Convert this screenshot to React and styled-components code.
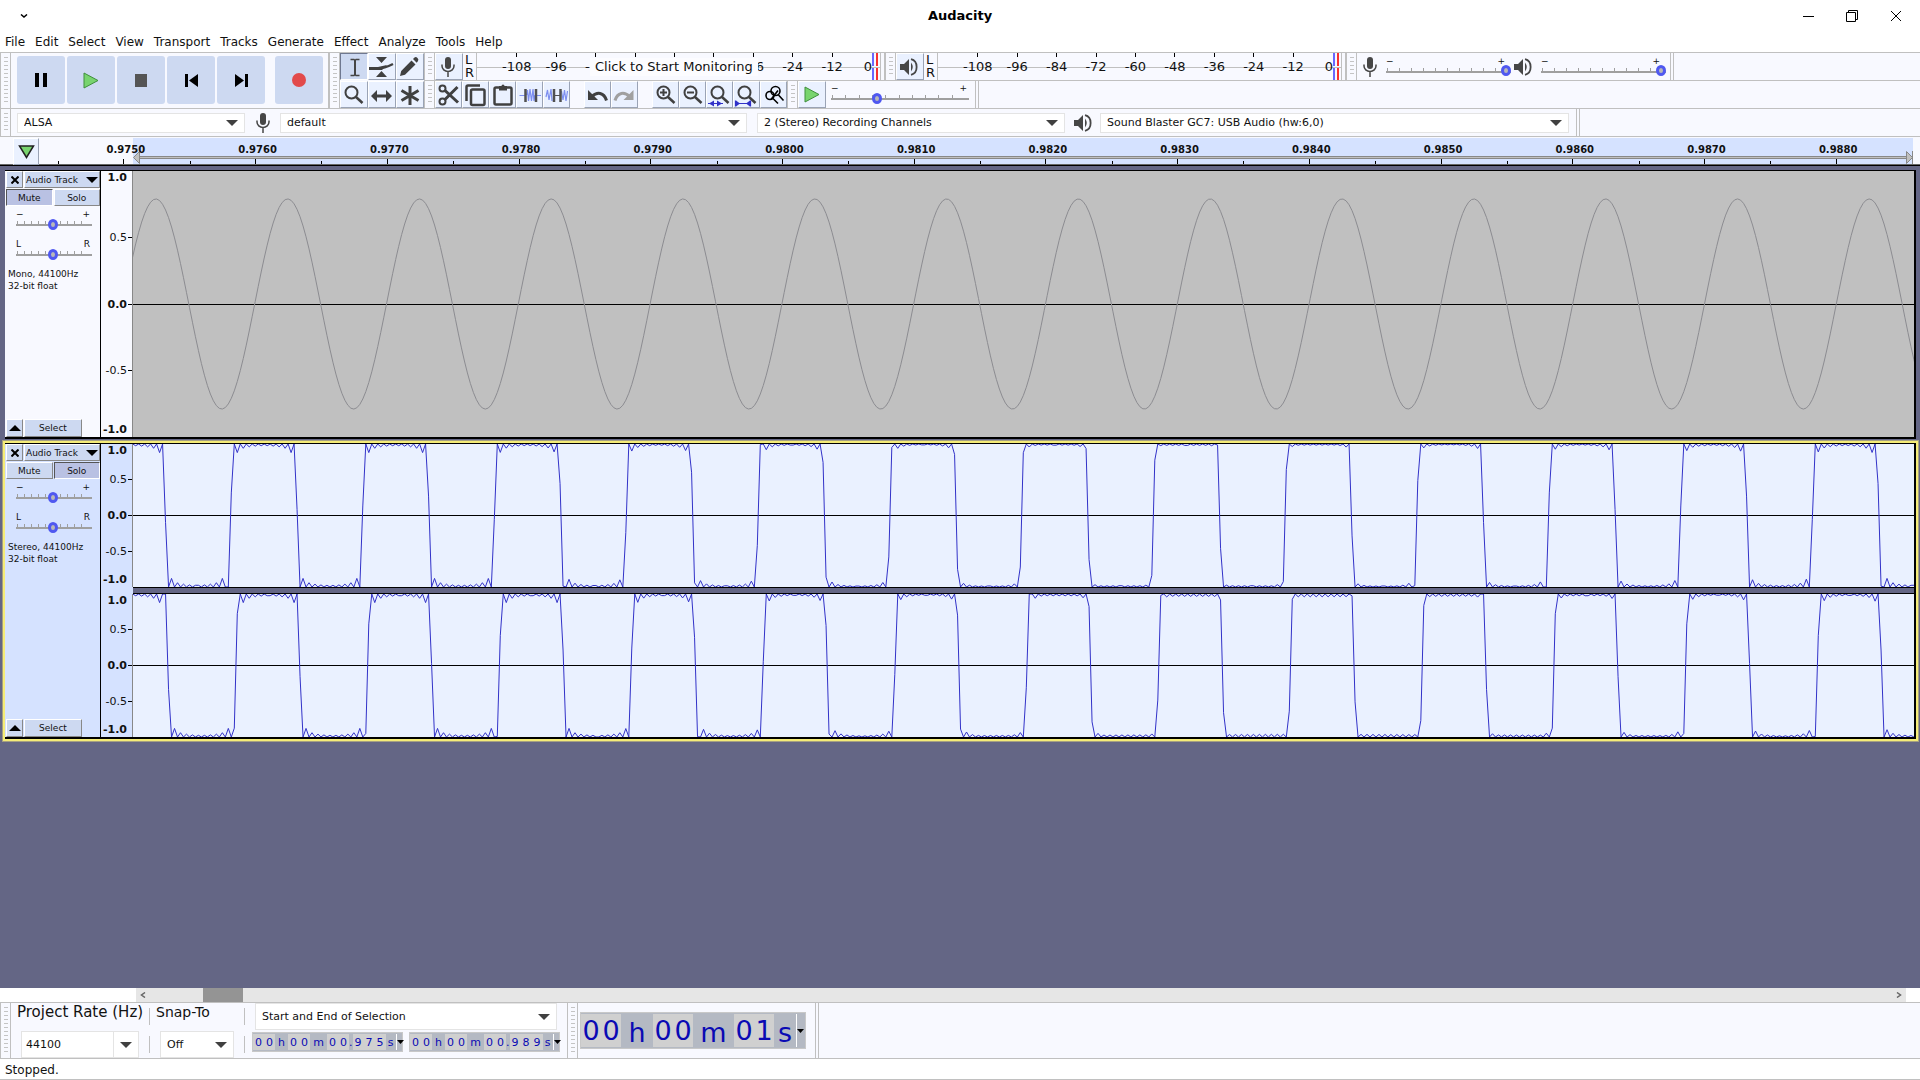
import React from "react";
import styled, { createGlobalStyle, css } from "styled-components";

const PERIOD = 131.8;
const SAMPLE = PERIOD / 44.1;
const FIRST_SAMPLE = 101.3 - SAMPLE * 35;
const WAVE_WIDTH = 1781;
const EDGE = 2.5;

const sine = (x) => 0.79 * Math.sin((2 * Math.PI * (x + 10.1)) / PERIOD);

const mod = (v, m) => ((v % m) + m) % m;

// square wave with ringing after each edge, the ringing is weakest around "calm"
const square = (rise, high, calm, floor) => (x) => {
    const p = mod(x - rise, PERIOD);
    const up = p < high;
    const before = up ? p : p - high;
    const after = up ? high - p : PERIOD - p;
    const near = Math.min(before, after);
    const sign = up ? 1 : -1;
    if (near < EDGE) {
        return sign * Math.sin((Math.PI / 2) * (near / EDGE));
    }
    const j = Math.floor((near - EDGE) / SAMPLE);
    if (j % 2 === 0) {
        return sign;
    }
    const strength = Math.min(1, Math.abs(x - calm) / 700);
    const ring = (0.02 + 0.1 * strength) / ((j + 1) / 2);
    return sign * (1 - Math.max(ring, floor * (1 - strength), 0.01));
};

const left = square(97.8, 66.4, 1050, 0.02);
const right = square(103, 63.8, 1180, 0.04);

const wavePoints = (fn, height) => {
    const points = [];
    for (let x = FIRST_SAMPLE; x < WAVE_WIDTH + SAMPLE; x += SAMPLE) {
        points.push(`${x.toFixed(2)},${(height / 2 - (fn(x) * height) / 2).toFixed(2)}`);
    }
    return points.join(" ");
};

const Wave = ({ fn, height, color, bg }) => (
    <WaveSvg viewBox={`0 0 ${WAVE_WIDTH} ${height}`} preserveAspectRatio="none" $bg={bg}>
        <line x1="0" x2={WAVE_WIDTH} y1={Math.floor(height / 2) + 0.5} y2={Math.floor(height / 2) + 0.5} stroke="#000" />
        <polyline points={wavePoints(fn, height)} fill="none" stroke={color} />
    </WaveSvg>
);

const Mic = () => (
    <svg width="14" height="20" viewBox="0 0 14 20">
        <rect x="4" y="0" width="6" height="12" rx="3" fill="#464646" />
        <path d="M1 7.500v1.500a6 5.500 0 0 0 12 0V7.500M7 15v5" fill="none" stroke="#464646" strokeWidth="1.500" />
    </svg>
);

const Speaker = () => (
    <svg width="18" height="18" viewBox="0 0 18 18">
        <path d="M0 6h4l5-5v16l-5-5H0z" fill="#464646" />
        <path d="M11 4.500q3.500 4.500 0 9z" fill="#464646" />
        <path d="M11 1.200c7.500 1.800 7.500 13.800 0 15.600" fill="none" stroke="#464646" strokeWidth="1.800" />
    </svg>
);

const Arrow = () => (
    <svg width="12" height="6" viewBox="0 0 12 6">
        <path d="M0 0h12L6 6z" fill="#404040" />
    </svg>
);

const Lens = ({ children }) => (
    <svg width="24" height="24" viewBox="0 0 24 24" fill="none" stroke="#404040" strokeWidth="2">
        <circle cx="10.500" cy="9.500" r="6" />
        <path d="M15 14l6.500 6" strokeWidth="2.500" />
        {children}
    </svg>
);

const icons = {
    pause: (
        <svg width="12" height="14" viewBox="0 0 12 14">
            <path d="M0 0h4v14H0zM8 0h4v14H8z" />
        </svg>
    ),
    play: (
        <svg width="16" height="17" viewBox="0 0 16 17">
            <path d="M1 1v15l14-7.500z" fill="#78d46e" stroke="#3f8f3c" />
        </svg>
    ),
    stop: (
        <svg width="12" height="13" viewBox="0 0 12 13">
            <path d="M0 0h12v13H0z" fill="#555" />
        </svg>
    ),
    start: (
        <svg width="13" height="13" viewBox="0 0 13 13">
            <path d="M0 0h3v13H0zM13 0v13L4 6.500z" />
        </svg>
    ),
    end: (
        <svg width="13" height="13" viewBox="0 0 13 13">
            <path d="M10 0h3v13h-3zM0 0v13l9-6.500z" />
        </svg>
    ),
    record: (
        <svg width="14" height="14" viewBox="0 0 14 14">
            <circle cx="7" cy="7" r="7" fill="#e24a4a" />
        </svg>
    ),
    ibeam: (
        <svg width="24" height="24" viewBox="0 0 24 24" fill="none" stroke="#464646">
            <path d="M14 5v15" strokeWidth="2" />
            <path d="M9.500 4.500h3.500l1 1 1-1h3.500M9.500 20.500h3.500l1-1 1 1h3.500" strokeWidth="1.500" />
        </svg>
    ),
    envelope: (
        <svg width="26" height="24" viewBox="0 0 26 24" fill="#404040">
            <path d="M8 2h11l-5.500 6zM8 22h11l-5.500-6z" />
            <path d="M1 13.500h9c5 0 9-1.500 15-4.500" fill="none" stroke="#404040" strokeWidth="2.500" />
            <path d="M1 12h9l9-2-5 5H1z" />
        </svg>
    ),
    draw: (
        <svg width="24" height="24" viewBox="0 0 24 24" fill="#404040">
            <path d="M3 21l1.200-5L14.500 5.500l4 4L8 19.800zM16 4l1.500-1.500q1.500-1 3 .5t.5 3L19.700 7.700z" />
        </svg>
    ),
    lens: <Lens />,
    shift: (
        <svg width="24" height="24" viewBox="0 0 24 24" fill="#404040">
            <path d="M2 13l6-6v4.500h9V7l6 6-6 6v-4.500H8V19z" />
        </svg>
    ),
    multi: (
        <svg width="24" height="24" viewBox="0 0 24 24" stroke="#404040" strokeWidth="3">
            <path d="M13 3v19M4.500 7.500l17 10M21.500 7.500l-17 10" />
        </svg>
    ),
    cut: (
        <svg width="24" height="24" viewBox="0 0 24 24" fill="none" stroke="#404040" strokeWidth="2">
            <circle cx="6.500" cy="5.500" r="3" />
            <circle cx="6.500" cy="18.500" r="3" />
            <path d="M9 7.500L22 19.500M9 16.500L21.500 4" strokeWidth="3" />
        </svg>
    ),
    copy: (
        <svg width="24" height="24" viewBox="0 0 24 24" fill="none" stroke="#404040" strokeWidth="2.500">
            <rect x="8" y="6.500" width="13.500" height="15.500" rx="1.500" />
            <path d="M3.500 18V4q0-1.500 1.500-1.500h12" />
        </svg>
    ),
    paste: (
        <svg width="24" height="24" viewBox="0 0 24 24" fill="none" stroke="#404040" strokeWidth="2.500">
            <rect x="4.500" y="4.500" width="17" height="17" rx="1.500" />
            <path d="M9 3h8v4.500H9z" fill="#404040" stroke="none" />
            <circle cx="13" cy="3" r="1.500" fill="#404040" stroke="none" />
        </svg>
    ),
    trim: (
        <svg width="24" height="24" viewBox="0 0 24 24" fill="none">
            <path d="M2.500 12.500h6M19 12.500h5M9.500 12l1-5 1 11L13 6l1.500 12L16 6l1 12 1-6" stroke="#7d8ff0" strokeWidth="1.200" />
            <path d="M8.500 6v13M19 6v13" stroke="#505050" strokeWidth="2.500" />
        </svg>
    ),
    silence: (
        <svg width="24" height="24" viewBox="0 0 24 24" fill="none">
            <path d="M2 14l1.500-7L5 17l2-11 1 12M17.500 8l1.500 9L20.500 7 22 18l1.500-10" stroke="#7d8ff0" strokeWidth="1.200" />
            <path d="M10 12.500h7" stroke="#505050" />
            <path d="M10 6v13M16.500 6v13" stroke="#505050" strokeWidth="2.500" />
        </svg>
    ),
    undo: (
        <svg width="24" height="24" viewBox="0 0 24 24">
            <path d="M3 7v10h10z" fill="#404040" />
            <path d="M7 13.500c5-5 12-4.500 14.500 4" fill="none" stroke="#404040" strokeWidth="3" />
        </svg>
    ),
    redo: (
        <svg width="24" height="24" viewBox="0 0 24 24">
            <path d="M21.500 7v10h-10z" fill="#a0a0a0" />
            <path d="M17.500 13.500c-5-5-12-4.500-14.500 4" fill="none" stroke="#a0a0a0" strokeWidth="3" />
        </svg>
    ),
    zoomIn: <Lens><path d="M10.500 6v7M7 9.500h7" /></Lens>,
    zoomOut: <Lens><path d="M7 9.500h7" /></Lens>,
    zoomSel: (
        <Lens>
            <path d="M1 20.500h15" stroke="#3030c8" strokeWidth="1" />
            <path d="M2 20.500l5-3v6zM15 20.500l-5-3v6z" fill="#3030c8" stroke="none" />
        </Lens>
    ),
    zoomFit: (
        <Lens>
            <path d="M1.500 17.500v6M16.500 17.500v6M2 20.500h14" stroke="#3030c8" strokeWidth="1.200" />
            <path d="M2 17.500l4 3-4 3zM16 17.500l-4 3 4 3z" fill="#3030c8" stroke="none" />
        </Lens>
    ),
    zoomToggle: (
        <svg width="24" height="24" viewBox="0 0 24 24" fill="none" stroke="#000" strokeWidth="1.600">
            <circle cx="14.500" cy="8" r="4.500" />
            <circle cx="9" cy="12.500" r="4" />
            <path d="M12 15.500l5 5M17.500 12l5 5.500M10 16.500l7-9" />
        </svg>
    ),
};

const RangeSlider = ({ label, low = "−", high = "+", value, className }) => (
    <SliderBox className={className}>
        <SliderEnds><span>{low}</span><span>{high}</span></SliderEnds>
        <Range type="range" aria-label={label} defaultValue={value} />
    </SliderBox>
);

const Dropdown = ({ label, value, basis, tall }) => (
    <SelectBox $basis={basis} $tall={tall}>
        <Select aria-label={label} defaultValue={value}><option>{value}</option></Select>
        <Arrow />
    </SelectBox>
);

const levels = [-108, -96, -84, -72, -60, -48, -36, -24, -12];

const LevelMeter = ({ name, icon, prompt }) => (
    <MeterBar>
        <Grip />
        <ToolButton aria-label={name} $width={28}>{icon}</ToolButton>
        <Channels><span>L</span><span>R</span></Channels>
        <Scale>
            {levels.map((l) => <Level key={l}>{l}</Level>)}
            <LastLevel>0</LastLevel>
            <Peak $color="#6a66ff" />
            <Peak $color="#f83030" />
            {prompt && <Prompt>{prompt}</Prompt>}
        </Scale>
    </MeterBar>
);

const AxisLabels = ({ selected }) => (
    <Axis $selected={selected}>
        <b>1.0</b>
        <span>0.5</span>
        <b>0.0</b>
        <span>-0.5</span>
        <b>-1.0</b>
    </Axis>
);

const Track = ({ info, selected, mute, solo, children }) => (
    <TrackFrame $selected={selected}>
        <Panel $selected={selected}>
            <PanelRow $columns="17px 1fr">
                <PanelButton aria-label="Close">
                    <svg width="8" height="8" viewBox="0 0 8 8" stroke="#000" strokeWidth="2"><path d="M0.500 0.500l7 7M7.500 0.500l-7 7" /></svg>
                </PanelButton>
                <PanelButton $spread>
                    Audio Track
                    <svg width="12" height="6" viewBox="0 0 12 6"><path d="M0 0h12L6 6z" /></svg>
                </PanelButton>
            </PanelRow>
            <PanelRow $columns="1fr 1fr">
                <PanelButton $on={mute}>Mute</PanelButton>
                <PanelButton $on={solo}>Solo</PanelButton>
            </PanelRow>
            <PanelSlider label="Gain" value={49} />
            <PanelSlider label="Pan" low="L" high="R" value={49} />
            <Info>{info}<br />32-bit float</Info>
            <PanelFoot>
                <PanelButton aria-label="Collapse">
                    <svg width="12" height="6" viewBox="0 0 12 6"><path d="M0 6h12L6 0z" /></svg>
                </PanelButton>
                <PanelButton>Select</PanelButton>
            </PanelFoot>
        </Panel>
        <ChannelStack>{children}</ChannelStack>
    </TrackFrame>
);

const unitWidths = {
    big: { h: 32, m: 41, s: 22 },
    small: { h: 13, m: 17, ".": 2, s: 10 },
};

const TimeField = ({ parts, big }) => (
    <TimeBox $big={big}>
        {parts.map(([digits, unit], i) => (
            <React.Fragment key={i}>
                <Digits $big={big}>{[...digits].map((d, n) => <span key={n}>{d}</span>)}</Digits>
                <Unit $big={big} $width={unitWidths[big ? "big" : "small"][unit]}>{unit}</Unit>
            </React.Fragment>
        ))}
        <TimeMenu aria-label="Time format">
            <svg width="7" height="4" viewBox="0 0 7 4"><path d="M0 0h7L3.500 4z" /></svg>
        </TimeMenu>
    </TimeBox>
);

const menus = ["File", "Edit", "Select", "View", "Transport", "Tracks", "Generate", "Effect", "Analyze", "Tools", "Help"];
const ticks = Array.from({ length: 14 }, (_, i) => (0.975 + i / 1000).toFixed(4));

const App = () => {
    return (
        <Window>
            <Global />
            <TitleBar>
                <TitleButton aria-label="Window menu">
                    <svg width="8" height="4" viewBox="0 0 8 4" fill="none" stroke="#000" strokeWidth="1.500"><path d="M1 0.500l3 2.500 3-2.500" /></svg>
                </TitleButton>
                <Title>Audacity</Title>
                <WindowButtons>
                    <TitleButton aria-label="Minimize"><svg width="12" height="12" stroke="#000"><path d="M1 6.500h11" /></svg></TitleButton>
                    <TitleButton aria-label="Restore"><svg width="14" height="14" fill="none" stroke="#000"><path d="M1.500 3.500h9v9h-9zM3.500 3V1.500h9v9h-2" /></svg></TitleButton>
                    <TitleButton aria-label="Quit"><svg width="12" height="12" stroke="#000"><path d="M1 1l10 10M11 1L1 11" /></svg></TitleButton>
                </WindowButtons>
            </TitleBar>
            <MenuBar>
                {menus.map((m) => <MenuItem key={m}>{m}</MenuItem>)}
            </MenuBar>

            <Dock>
                <TransportBar>
                    <Grip />
                    <TransportButtons>
                        {["pause", "play", "stop", "start", "end", "record"].map((n) => (
                            <TransportButton key={n} aria-label={n}>{icons[n]}</TransportButton>
                        ))}
                    </TransportButtons>
                </TransportBar>
                <ToolsBar>
                    <Grip />
                    <ToolGrid>
                        {["ibeam", "envelope", "draw", "lens", "shift", "multi"].map((n) => (
                            <ToolButton key={n} aria-label={n} $width={28} $on={n === "ibeam"}>{icons[n]}</ToolButton>
                        ))}
                    </ToolGrid>
                </ToolsBar>
                <DockRows>
                    <DockRow>
                        <LevelMeter name="Record meter" icon={<Mic />} prompt="Click to Start Monitoring" />
                        <LevelMeter name="Playback meter" icon={<Speaker />} />
                        <Grip />
                        <Mixer>
                            <Mic />
                            <MixerSlider label="Recording volume" value={100} />
                            <Speaker />
                            <MixerSlider label="Playback volume" value={100} />
                        </Mixer>
                        <BarEnd />
                    </DockRow>
                    <DockRow>
                        <Grip />
                        <ButtonGroup>
                            {["cut", "copy", "paste", "trim", "silence"].map((n) => <ToolButton key={n} aria-label={n}>{icons[n]}</ToolButton>)}
                        </ButtonGroup>
                        <ButtonGroup>
                            {["undo", "redo"].map((n) => <ToolButton key={n} aria-label={n}>{icons[n]}</ToolButton>)}
                        </ButtonGroup>
                        <div>
                            {["zoomIn", "zoomOut", "zoomSel", "zoomFit", "zoomToggle"].map((n) => <ToolButton key={n} aria-label={n}>{icons[n]}</ToolButton>)}
                        </div>
                        <Grip />
                        <ToolButton aria-label="Play at speed" $width={28} $centered>{icons.play}</ToolButton>
                        <SpeedSlider label="Playback speed" value={32} />
                        <BarEnd />
                    </DockRow>
                </DockRows>
            </Dock>

            <DeviceRow>
                <Grip />
                <Devices>
                    <Dropdown label="Audio host" value="ALSA" basis={228} />
                    <DeviceIcon><Mic /></DeviceIcon>
                    <Dropdown label="Recording device" value="default" basis={467} />
                    <Gap />
                    <Dropdown label="Recording channels" value="2 (Stereo) Recording Channels" basis={308} />
                    <DeviceIcon><Speaker /></DeviceIcon>
                    <Dropdown label="Playback device" value="Sound Blaster GC7: USB Audio (hw:6,0)" basis={469} />
                </Devices>
                <BarEnd />
            </DeviceRow>

            <Timeline>
                <PinBox>
                    <ToolButton aria-label="Pinned play head" $width={26} $centered>
                        <svg width="17" height="14" viewBox="0 0 17 14"><path d="M1.500 1h14l-7 11.500z" fill="#78d46e" stroke="#222" strokeWidth="1.500" /></svg>
                    </ToolButton>
                </PinBox>
                <RulerArea>
                    <Selection>
                        <svg width="7" height="13" viewBox="0 0 7 13"><path d="M6.500 0.500v12L0.500 6.500z" fill="#c0c0c0" stroke="#888" /></svg>
                        <SelectionBar />
                        <svg width="7" height="13" viewBox="0 0 7 13"><path d="M0.500 0.500v12l6-6zM6.500 0v13" fill="#c0c0c0" stroke="#888" /></svg>
                    </Selection>
                    <Ticks>
                        {ticks.map((t) => <Tick key={t}>{t}</Tick>)}
                    </Ticks>
                </RulerArea>
            </Timeline>

            <Tracks>
                <Track info="Mono, 44100Hz" mute>
                    <Channel $height={266}>
                        <AxisLabels />
                        <Wave fn={sine} height={266} color="#8c8c91" bg="#c0c0c0" />
                    </Channel>
                </Track>
                <Track info="Stereo, 44100Hz" selected solo>
                    <Channel $height={143}>
                        <AxisLabels selected />
                        <Wave fn={left} height={143} color="#3232c8" bg="#eaf1ff" />
                    </Channel>
                    <Splitter />
                    <Channel $height={143}>
                        <AxisLabels selected />
                        <Wave fn={right} height={143} color="#3232c8" bg="#eaf1ff" />
                    </Channel>
                </Track>
            </Tracks>

            <ScrollBar>
                <ScrollRail>
                    <svg width="6" height="6" viewBox="0 0 6 6" fill="none" stroke="#666" strokeWidth="1.500"><path d="M5 0.500L1.500 3 5 5.500" /></svg>
                    <Thumb />
                    <svg width="6" height="6" viewBox="0 0 6 6" fill="none" stroke="#666" strokeWidth="1.500"><path d="M1 0.500L4.500 3 1 5.500" /></svg>
                </ScrollRail>
            </ScrollBar>

            <BottomDock>
                <Grip />
                <RateColumn>
                    <Caption htmlFor="rate">Project Rate (Hz)</Caption>
                    <RateBox>
                        <RateInput id="rate" defaultValue="44100" />
                        <RateButton aria-label="Rates"><Arrow /></RateButton>
                    </RateBox>
                </RateColumn>
                <Divider />
                <SnapColumn>
                    <Caption as="span">Snap-To</Caption>
                    <Dropdown label="Snap-To" value="Off" basis={74} tall />
                </SnapColumn>
                <Divider />
                <SelectionColumn>
                    <Dropdown label="Selection mode" value="Start and End of Selection" basis={302} tall />
                    <TimeRow>
                        <TimeField parts={[["00", "h"], ["00", "m"], ["00", "."], ["975", "s"]]} />
                        <TimeField parts={[["00", "h"], ["00", "m"], ["00", "."], ["989", "s"]]} />
                    </TimeRow>
                </SelectionColumn>
                <Grip />
                <BigTime>
                    <TimeField big parts={[["00", "h"], ["00", "m"], ["01", "s"]]} />
                </BigTime>
                <BarEnd />
            </BottomDock>
            <StatusBar>Stopped.</StatusBar>
        </Window>
    )
}

export default App

const line = "#c0c0c0";
const face = "#f8f9ff";

const Global = createGlobalStyle`
    * {
        box-sizing: border-box;
    }

    body {
        margin: 0;
        overflow: hidden;
    }

    button, input, select {
        margin: 0;
        padding: 0;
        border: 0;
        border-radius: 0;
        font: inherit;
        color: inherit;
        background: none;
    }

    svg {
        display: block;
        flex: none;
    }
`

const Window = styled.div`
    display: flex;
    flex-direction: column;
    min-height: 100vh;
    background: #fff;
    color: #111;
    font: 12px/16px "DejaVu Sans", sans-serif;
`

const TitleBar = styled.header`
    display: grid;
    grid-template-columns: 1fr auto 1fr;
    align-items: center;
    height: 32px;
    padding: 0 17px;
`

const Title = styled.h1`
    margin: 0;
    font-size: 13px;
    line-height: 20px;
    color: #000;
`

const WindowButtons = styled.div`
    display: flex;
    justify-content: flex-end;
    gap: 30px;
`

const TitleButton = styled.button`
    display: flex;
    align-items: center;
    justify-content: center;
    justify-self: start;
    min-width: 14px;
`

const MenuBar = styled.nav`
    display: flex;
    height: 20px;
    padding-bottom: 1px;
`

const MenuItem = styled.button`
    padding: 0 5px;
`

const Dock = styled.div`
    display: flex;
    border-top: 1px solid ${line};
    background: ${face};
`

const Grip = styled.div`
    flex: none;
    width: 11px;
    border: 1px solid ${line};
    border-top: 0;
    border-bottom: 0;
    background: repeating-linear-gradient(#c4c4c4 0 1px, transparent 1px 4px) center / 4px calc(100% - 8px) no-repeat ${face};
`

const TransportBar = styled.div`
    display: flex;
    width: 329px;
    border-right: 1px solid ${line};
    border-bottom: 1px solid ${line};
`

const TransportButtons = styled.div`
    display: flex;
    gap: 2px;
    padding: 3px 0 0 6px;
`

const TransportButton = styled.button`
    display: flex;
    align-items: center;
    justify-content: center;
    width: 48px;
    height: 48px;
    border-radius: 3px;
    background: #cdd9f1;

    &:last-child {
        margin-left: 8px;
    }
`

const ToolsBar = styled.div`
    display: flex;
    border-bottom: 1px solid ${line};
`

const ToolGrid = styled.div`
    display: grid;
    grid-template-columns: repeat(3, 28px);
    grid-auto-rows: 27px;
    row-gap: 1px;
`

const ToolButton = styled.button`
    display: inline-flex;
    flex: none;
    align-items: center;
    justify-content: center;
    width: ${(p) => p.$width || 27}px;
    height: 27px;
    padding-right: ${(p) => (p.$centered ? 0 : 2)}px;
    border: 1px solid;
    border-color: #fff #9aa3b5 #9aa3b5 #fff;
    background: #eaf1ff;
    vertical-align: top;

    ${(p) => p.$on && css`
        border-color: #6f7890 #fff #fff #6f7890;
        background: #cdd9f1;
    `}
`

const DockRows = styled.div`
    flex: 1;
    min-width: 0;
`

const DockRow = styled.div`
    display: flex;
    height: 28px;
    border-bottom: 1px solid ${line};
`

const MeterBar = styled.div`
    display: flex;
    width: 461px;
    border-right: 1px solid ${line};
`

const Channels = styled.div`
    display: flex;
    flex-direction: column;
    width: 13px;
    padding-left: 2px;
    font-size: 13px;
    line-height: 13px;
`

const Scale = styled.div`
    position: relative;
    flex: 1;
    display: flex;
    margin-right: 3px;
    padding-left: 20px;
    border: 1px solid ${line};
    border-top: 0;
    border-bottom: 0;
    background: linear-gradient(${line}, ${line}) 0 14px / 100% 1px no-repeat;
    font-size: 13px;
    line-height: 27px;
`

const Level = styled.span`
    flex: 1;
    min-width: 0;
    display: flex;
    justify-content: center;
    background: linear-gradient(#000, #000) center top / 1px 4px no-repeat;
`

const LastLevel = styled.span`
    width: 20px;
    text-align: right;
`

const Peak = styled.i`
    width: 2px;
    margin-right: 2px;
    background: linear-gradient(${(p) => p.$color} 13px, transparent 13px 15px, ${(p) => p.$color} 15px);
`

const Prompt = styled.button`
    position: absolute;
    top: 5px;
    left: 113px;
    padding: 0 5px;
    background: #fcfcff;
    line-height: 18px;
    white-space: nowrap;
`

const SliderBox = styled.div`
    display: flex;
    flex-direction: column;
`

const SliderEnds = styled.div`
    display: flex;
    justify-content: space-between;
    height: 8px;
    padding: 0 2px 0 0;
    font-size: 9px;
    line-height: 8px;
`

const Range = styled.input`
    appearance: none;
    width: 100%;
    height: 12px;
    background:
        linear-gradient(#9f9f9f, #9f9f9f) 0 6px / 100% 2px no-repeat,
        repeating-linear-gradient(90deg, #9f9f9f 0 1px, transparent 1px 10%) 1px 3px / calc(100% - 5px) 3px no-repeat;

    &::-webkit-slider-thumb {
        appearance: none;
        width: 10px;
        height: 11px;
        border: 3px solid #4f58f0;
        border-radius: 50%;
        background: #b8b8b8;
    }
`

const Mixer = styled.div`
    display: flex;
    align-items: center;
    gap: 3px;
    padding: 0 4px 0 6px;
`

const MixerSlider = styled(RangeSlider)`
    width: 125px;
    margin-left: 6px;

    ${SliderEnds} {
        padding-right: 6px;
    }
`

const SpeedSlider = styled(RangeSlider)`
    width: 138px;
    margin: 3px 6px 0 5px;
`

const PanelSlider = styled(RangeSlider)`
    width: 76px;
    margin: 3px 0 7px 10px;
`

const BarEnd = styled.div`
    width: 4px;
    border: 1px solid ${line};
    border-top: 0;
    border-bottom: 0;
`

const ButtonGroup = styled.div`
    margin-right: 14px;
`

const DeviceRow = styled.div`
    display: flex;
    height: 28px;
    border-bottom: 1px solid ${line};
    background: ${face};
`

const Devices = styled.div`
    display: flex;
    align-items: center;
    padding: 0 7px 0 6px;
`

const DeviceIcon = styled.div`
    display: flex;
    justify-content: center;
    width: 35px;
`

const Gap = styled.div`
    width: 10px;
`

const SelectBox = styled.div`
    display: grid;
    align-items: center;
    width: ${(p) => p.$basis}px;
    height: ${(p) => (p.$tall ? 27 : 20)}px;
    border: 1px solid #e4e4e4;
    background: #fff;

    > * {
        grid-area: 1 / 1;
    }

    > svg {
        justify-self: end;
        margin-right: 6px;
        pointer-events: none;
    }
`

const Select = styled.select`
    appearance: none;
    width: 100%;
    height: 100%;
    padding-left: 6px;
    font-size: 11px;
`

const Timeline = styled.div`
    display: flex;
    height: 28px;
    background: ${face};
    border-bottom: 1px solid #666;
`

const PinBox = styled.div`
    width: 39px;
    padding: 1px 0 0 2px;
    border-left: 11px solid ${face};
`

const RulerArea = styled.div`
    flex: 1;
    display: grid;
    padding-top: 1px;

    > * {
        grid-area: 1 / 1;
    }
`

const Selection = styled.div`
    display: flex;
    align-items: flex-end;
    margin: 0 7px 0 94px;
    background: #d5e2ff;
`

const SelectionBar = styled.div`
    flex: 1;
    height: 3px;
    margin-bottom: 5px;
    border: 1px solid #888;
    border-left: 0;
    border-right: 0;
    background: #c0c0c0;
`

const Ticks = styled.div`
    display: flex;
    margin: 0 18px 0 19px;
`

const Tick = styled.span`
    flex: 1;
    padding-left: 4px;
    background:
        linear-gradient(#000, #000) center bottom / 1px 5px no-repeat,
        linear-gradient(#000, #000) left bottom / 1px 3px no-repeat;
    font-weight: bold;
    font-size: 10px;
    line-height: 23px;
    text-align: center;
`

const Tracks = styled.main`
    flex: 1;
    display: flex;
    flex-direction: column;
    gap: 1px;
    padding: 4px 1px 0 2px;
    border-top: 1px solid #000;
    background: #646685;
`

const TrackFrame = styled.section`
    display: flex;
    border: 3px solid;
    border-width: 0 3px 0 3px;
    border-color: #646685;
    background: #000;
    padding: 1px 2px 2px 0;

    ${(p) => p.$selected && css`
        border-width: 3px;
        border-color: #f5ec78;
        outline: 1px solid #a5a082;
        outline-offset: -1px;
    `}
`

const Panel = styled.div`
    display: flex;
    flex-direction: column;
    width: 96px;
    padding-left: 1px;
    border-right: 1px solid #000;
    background: ${(p) => (p.$selected ? "#d5e2ff" : face)};
`

const PanelRow = styled.div`
    display: grid;
    grid-template-columns: ${(p) => p.$columns};
    grid-auto-rows: 17px;
    margin-bottom: 1px;
    gap: 1px;
`

const PanelButton = styled.button`
    display: flex;
    align-items: center;
    justify-content: ${(p) => (p.$spread ? "space-between" : "center")};
    padding: 0 1px;
    border: 1px solid;
    border-color: #fff #888 #888 #fff;
    background: #cdd9f1;
    font-size: 9px;
    line-height: 12px;
    white-space: nowrap;

    ${(p) => p.$on && css`
        border-color: #555 #fff #fff #555;
        background: #b9c1e3;
    `}
`

const Info = styled.p`
    margin: 1px 0 0 2px;
    font-size: 9px;
    line-height: 12px;
    white-space: nowrap;
`

const PanelFoot = styled.div`
    display: grid;
    grid-template-columns: 17px 58px;
    gap: 1px;
    height: 18px;
    margin-top: auto;
`

const ChannelStack = styled.div`
    flex: 1;
    min-width: 0;
`

const Channel = styled.div`
    display: flex;
    height: ${(p) => p.$height}px;
`

const Splitter = styled.div`
    height: 7px;
    margin-left: 32px;
    border: 1px solid #000;
    border-left: 0;
    border-right: 0;
    background: #646685;
    box-shadow: -32px 0 #d5e2ff;
`

const Axis = styled.div`
    display: grid;
    grid-template-rows: 1fr 2fr 2fr 2fr 1fr;
    align-items: center;
    width: 32px;
    border-right: 1px solid #888;
    background: ${(p) => (p.$selected ? "#d5e2ff" : face)};
    font-size: 11px;
    line-height: 13px;

    > * {
        display: flex;
        align-items: center;
        justify-content: flex-end;
        gap: 1px;
    }

    > :nth-child(2)::after, > :nth-child(3)::after, > :nth-child(4)::after {
        content: "";
        width: 4px;
        height: 1px;
        background: #000;
    }

    > :first-child {
        align-self: start;
        padding-right: 5px;
    }

    > :last-child {
        align-self: end;
        padding: 0 5px 1px 0;
    }
`

const WaveSvg = styled.svg`
    flex: 1;
    min-width: 0;
    height: 100%;
    background: ${(p) => p.$bg};
`

const ScrollBar = styled.div`
    height: 14px;
    padding: 0 14px 0 136px;
    background: #fff;
`

const ScrollRail = styled.div`
    display: grid;
    grid-template-columns: 67px 40px 1fr;
    align-items: center;
    height: 14px;
    padding: 0 4px 0 0;
    background: #e6e6e6;

    > svg:first-child {
        margin-left: 4px;
    }

    > svg:last-child {
        justify-self: end;
    }
`

const Thumb = styled.div`
    height: 14px;
    background: #949494;
`

const BottomDock = styled.div`
    display: flex;
    height: 57px;
    border: 1px solid ${line};
    border-left: 0;
    border-right: 0;
    background: ${face};
`

const Caption = styled.label`
    font-size: 15px;
    line-height: 18px;
    white-space: nowrap;
`

const RateColumn = styled.div`
    display: flex;
    flex-direction: column;
    justify-content: space-between;
    width: 138px;
    padding-left: 6px;
`

const SnapColumn = styled(RateColumn)`
    width: 94px;

    ${Caption} {
        font-size: 14px;
    }

    ${SelectBox} {
        margin-left: 4px;
    }
`

const RateBox = styled.div`
    display: flex;
    width: 118px;
    height: 27px;
    margin-left: 4px;
    border: 1px solid #e4e4e4;
    background: #fff;
`

const RateInput = styled.input`
    flex: 1;
    min-width: 0;
    padding-left: 4px;
    font-size: 11px;
`

const RateButton = styled.button`
    display: flex;
    align-items: center;
    justify-content: center;
    width: 25px;
    border-left: 1px solid #e4e4e4;
`

const Divider = styled.div`
    width: 1px;
    margin: 5px 0;
    background: linear-gradient(${line} 17px, transparent 17px 28px, ${line} 28px);
`

const SelectionColumn = styled.div`
    display: flex;
    flex-direction: column;
    gap: 2px;
    width: 322px;
    padding-left: 7px;

    ${SelectBox} {
        margin-left: 3px;
    }
`

const TimeRow = styled.div`
    display: flex;
    gap: 6px;
`

const TimeBox = styled.div`
    display: flex;
    width: ${(p) => (p.$big ? 226 : 151)}px;
    height: ${(p) => (p.$big ? 37 : 20)}px;
    padding: 1px 0;
    border: 1px solid #c8c8c8;
    background: #b4b9c3;
    color: #0a0ab4;
    font-size: ${(p) => (p.$big ? 27 : 11)}px;
    line-height: ${(p) => (p.$big ? 33 : 18)}px;
`

const Digits = styled.span`
    display: flex;
    background: #d0d0d0;

    span {
        width: ${(p) => (p.$big ? 20 : 11)}px;
        text-align: center;
    }
`

const Unit = styled.span`
    flex: 0 0 ${(p) => p.$width}px;
    display: flex;
    justify-content: center;
    padding-top: ${(p) => (p.$big ? 2 : 0)}px;
`

const TimeMenu = styled.button`
    flex: 1;
    display: flex;
    align-items: center;
    border-left: 1px solid #fff;
`

const BigTime = styled.div`
    display: flex;
    align-items: center;
    padding: 0 9px 0 2px;
`

const StatusBar = styled.footer`
    height: 21px;
    padding: 3px 5px 0;
    border-bottom: 1px solid ${line};
`
